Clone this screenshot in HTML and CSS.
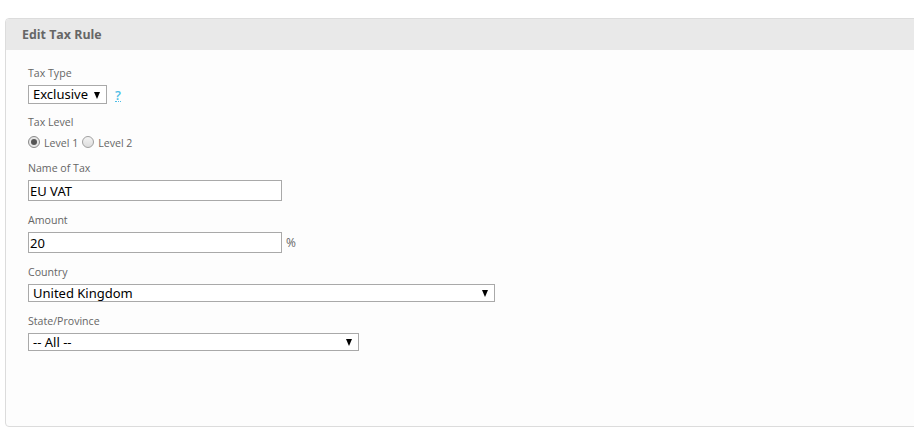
FILE: index.html
```html
<!DOCTYPE html>
<html>
<head>
<meta charset="utf-8">
<link rel="stylesheet" href="styles.css">
</head>
<body>
<div class="panel">
  <div class="panel-head">Edit Tax Rule</div>
  <div class="panel-body">
    <div class="group first">
      <label class="lbl">Tax Type</label>
      <div class="row">
        <span class="sel sel-type"><select><option>Exclusive</option></select></span>
        <a class="help">?</a>
      </div>
    </div>
    <div class="group">
      <label class="lbl">Tax Level</label>
      <div class="radios">
        <span class="radio checked"></span><span class="rlabel">Level 1</span>
        <span class="radio"></span><span class="rlabel">Level 2</span>
      </div>
    </div>
    <div class="group">
      <label class="lbl">Name of Tax</label>
      <input class="txt" type="text" value="EU VAT">
    </div>
    <div class="group">
      <label class="lbl">Amount</label>
      <div class="row">
        <input class="txt" type="text" value="20"><span class="unit">%</span>
      </div>
    </div>
    <div class="group">
      <label class="lbl">Country</label>
      <div class="sel sel-country"><select><option>United Kingdom</option></select></div>
    </div>
    <div class="group">
      <label class="lbl">State/Province</label>
      <div class="sel sel-state"><select><option>-- All --</option></select></div>
    </div>
  </div>
</div>
</body>
</html>
```

FILE: styles.css
```css
html, body {
  margin: 0;
  padding: 0;
  background: #fff;
}
body {
  font-family: "Open Sans", "Liberation Sans", sans-serif;
  color: #666;
}
.panel {
  margin: 18px 0 0 5px;
  width: 930px;
  height: 409px;
  border: 1px solid #dcdcdc;
  border-radius: 4px;
  overflow: hidden;
  box-sizing: border-box;
  background: #fdfdfd;
}
.panel-head {
  height: 31px;
  background: #e9e9e9;
  padding-left: 16px;
  font-size: 12.4px;
  font-weight: bold;
  line-height: 31px;
  color: #666;
}
.panel-body {
  padding: 15px 0 0 22px;
}
.group {
  margin-top: 11px;
}
.group.first {
  margin-top: 0;
}
.group:nth-child(2) {
  margin-top: 10px;
}
.lbl {
  display: block;
  font-size: 10.6px;
  line-height: 16px;
  height: 16px;
  margin-bottom: 4px;
  color: #666;
}
.row {
  display: flex;
  align-items: center;
}
.sel {
  display: block;
  width: fit-content;
  position: relative;
}
.sel select {
  appearance: none;
  -webkit-appearance: none;
  display: block;
  box-sizing: border-box;
  border: 1px solid #a9a9a9;
  border-radius: 0;
  background: #fff;
  margin: 0;
  padding: 0 0 0 4px;
  font-family: "Noto Sans", "Open Sans", sans-serif;
  font-size: 13px;
  color: #000;
  outline: none;
}
.sel::after {
  content: "";
  position: absolute;
  top: 50%;
  margin-top: -3px;
  right: 7px;
  width: 0;
  height: 0;
  border-left: 3.5px solid transparent;
  border-right: 3.5px solid transparent;
  border-top: 7px solid #000;
  pointer-events: none;
}
.sel-type select {
  width: 79px;
  height: 19px;
  line-height: 17px;
}
.sel-country select {
  width: 467px;
  height: 18px;
  line-height: 16px;
}
.sel-state select {
  width: 331px;
  height: 18px;
  line-height: 16px;
}
.help {
  margin-left: 8px;
  font-size: 13px;
  font-weight: 600;
  color: #4dbde6;
  border-bottom: 1px dotted #4dbde6;
  line-height: 12px;
  padding-top: 2px;
}
.radios {
  display: flex;
  align-items: center;
  height: 15px;
}
.radio {
  box-sizing: border-box;
  width: 12px;
  height: 12px;
  border: 1px solid #a0a0a0;
  border-radius: 50%;
  background: linear-gradient(#f4f4f4, #dcdcdc);
  position: relative;
}
.radio.checked {
  background: #e6e6e6;
  border-color: #8a8a8a;
}
.radio.checked::after {
  content: "";
  position: absolute;
  left: 2px;
  top: 2px;
  width: 6px;
  height: 6px;
  border-radius: 50%;
  background: #555;
}
.rlabel {
  font-size: 10.6px;
  color: #666;
  margin: 3px 4px 0 4px;
}
.txt {
  box-sizing: border-box;
  width: 254px;
  height: 21px;
  border: 1px solid #a9a9a9;
  margin: 0;
  padding: 0 1px;
  font-family: "Noto Sans", "Open Sans", sans-serif;
  font-size: 13px;
  color: #000;
  background: #fff;
  outline: none;
  display: block;
}
.unit {
  font-size: 12px;
  color: #666;
  margin-left: 4px;
}
```
